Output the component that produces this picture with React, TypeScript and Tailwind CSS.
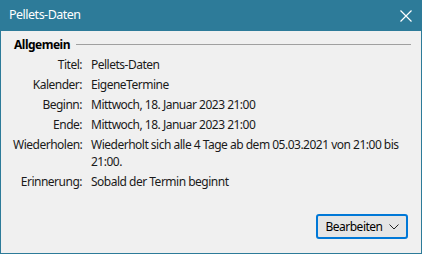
import React from "react";

const rows: [string, string][] = [
  ["Titel:", "Pellets-Daten"],
  ["Kalender:", "EigeneTermine"],
  ["Beginn:", "Mittwoch, 18. Januar 2023 21:00"],
  ["Ende:", "Mittwoch, 18. Januar 2023 21:00"],
  ["Wiederholen:", "Wiederholt sich alle 4 Tage ab dem 05.03.2021 von 21:00 bis 21:00."],
  ["Erinnerung:", "Sobald der Termin beginnt"],
];

export default function App() {
  return (
    <div
      className="w-[422px] h-[254px] flex flex-col bg-[#f0f0f0] overflow-hidden tracking-[-0.5px]"
      style={{ fontFamily: '"Noto Sans", "Open Sans", sans-serif' }}
    >
      <div className="h-[31px] shrink-0 bg-[#2d7b99] flex items-center justify-between pl-[9px] pr-[9px]">
        <span className="text-white text-[12.5px] leading-none">Pellets-Daten</span>
        <svg width="12" height="12" viewBox="0 0 12 12" className="mr-[1px]">
          <path d="M0.5 0.5 L11.5 11.5 M11.5 0.5 L0.5 11.5" stroke="white" strokeWidth="1.2" fill="none" />
        </svg>
      </div>
      <div className="flex-1 flex flex-col border-x border-b border-[#2d7b99] px-[12px]">
        <div className="flex items-center mt-[6px] h-[15px]">
          <span className="text-[12px] font-bold text-black leading-none pl-[1px]">Allgemein</span>
          <div className="flex-1 h-px bg-[#a0a0a0] ml-[6px] mr-[-2px]" />
        </div>
        <div className="grid grid-cols-[69px_1fr] gap-x-[9px] gap-y-[3px] mt-[4px] text-[12px] text-[#1a1a1a] leading-[17px]">
          {rows.map(([l, v]) => (
            <React.Fragment key={l}>
              <div className="text-right">{l}</div>
              <div className="pr-[2px]">{v}</div>
            </React.Fragment>
          ))}
        </div>
        <div className="flex-1" />
        <div className="flex justify-end pb-[14px] pr-[1px]">
          <button className="h-[25px] w-[92px] rounded-[3px] border-2 border-[#0078d7] bg-[#e5e5e5] flex items-center justify-center gap-[6px] text-[12px] text-black">
            <span>Bearbeiten</span>
            <svg width="10" height="6" viewBox="0 0 10 6">
              <path d="M0.5 0.5 L5 5 L9.5 0.5" stroke="#222" strokeWidth="1" fill="none" />
            </svg>
          </button>
        </div>
      </div>
    </div>
  );
}
